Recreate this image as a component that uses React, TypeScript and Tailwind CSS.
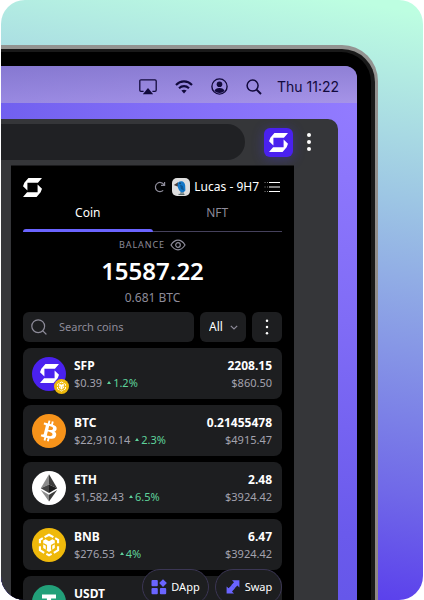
import React from "react";

const FONT = "font-['Noto_Sans','Open_Sans',sans-serif]";

function SMark({ className }: { className: string }) {
  return (
    <svg viewBox="0 0 56 56" className={className} fill="currentColor" aria-hidden="true">
      <path d="M16 0H56L44 14H13V37L0 24 4 14Z" />
      <path d="M40 56H0L12 42H43V19L56 32 52 42Z" />
    </svg>
  );
}

function BnbIcon({ className }: { className: string }) {
  return (
    <svg viewBox="0 0 34 34" className={className} aria-hidden="true">
      <circle cx="17" cy="17" r="17" fill="#efb90b" />
      <g fill="none" stroke="#fff" strokeWidth="2.1">
        <path d="M12.6 9.2 17 6.8 21.4 9.2" />
        <path d="M7.9 15.2V11.8L10.8 10.2" />
        <path d="M26.1 15.2V11.8L23.2 10.2" />
        <path d="M7.9 18.2V22.2L12.2 24.8" />
        <path d="M26.1 18.2V22.2L21.8 24.8" />
        <path d="M14.4 25.9 17 27.4 19.6 25.9" />
      </g>
      <path
        fill="#fff"
        d="M11.2 12.6 13.6 11.3 17 13.3 20.4 11.3 22.8 12.6V20L20.4 21.4 19.4 20.8V22.6L17 24 14.6 22.6V20.8L13.6 21.4 11.2 20Z"
      />
      <path fill="none" stroke="#efb90b" strokeWidth="1.3" d="M11.2 15.6 14.4 17.4V21.6M22.8 15.6 19.6 17.4V21.6" />
    </svg>
  );
}

function SfpIcon() {
  return (
    <span className="relative flex size-[34px] items-center justify-center rounded-full bg-[#4a21ef] text-white">
      <SMark className="size-[19px]" />
      <BnbIcon className="absolute -right-[3px] -bottom-[3px] size-[15px]" />
    </span>
  );
}

function BtcIcon() {
  return (
    <svg viewBox="0 0 32 32" className="size-[34px]" aria-hidden="true">
      <circle cx="16" cy="16" r="16" fill="#f7931a" />
      <path
        fill="#fff"
        d="M23.189 14.02c.314-2.096-1.283-3.223-3.465-3.975l.708-2.84-1.728-.43-.69 2.765c-.454-.114-.92-.22-1.385-.326l.695-2.783L15.596 6l-.708 2.839c-.376-.086-.746-.17-1.104-.26l.002-.009-2.384-.595-.46 1.846s1.283.294 1.256.312c.7.175.826.638.805 1.006l-.806 3.235c.048.012.11.03.18.057l-.183-.045-1.13 4.532c-.086.212-.303.531-.793.41.018.025-1.256-.313-1.256-.313l-.858 1.978 2.25.561c.418.105.828.215 1.231.318l-.715 2.872 1.727.43.708-2.84c.472.127.93.245 1.378.357l-.706 2.828 1.728.43.715-2.866c2.948.558 5.164.333 6.097-2.333.752-2.146-.037-3.385-1.588-4.192 1.13-.26 1.98-1.003 2.207-2.538zm-3.95 5.538c-.533 2.147-4.148.986-5.32.695l.95-3.805c1.172.293 4.929.872 4.37 3.11zm.535-5.569c-.487 1.953-3.495.96-4.47.717l.86-3.45c.975.243 4.118.696 3.61 2.733z"
      />
    </svg>
  );
}

function EthIcon() {
  return (
    <svg viewBox="0 0 34 34" className="size-[34px]" aria-hidden="true">
      <circle cx="17" cy="17" r="17" fill="#fff" />
      <path fill="#8c8c8c" d="M17 3.2V13.6L8.8 17.3Z" />
      <path fill="#3c3c3b" d="M17 3.2 25.2 17.3 17 13.6Z" />
      <path fill="#454545" d="M8.8 17.3 17 13.6V22.1Z" />
      <path fill="#1c1c1c" d="M17 13.6 25.2 17.3 17 22.1Z" />
      <path fill="#8c8c8c" d="M8.8 18.9 17 23.7V30.6Z" />
      <path fill="#3c3c3b" d="M25.2 18.9 17 23.7V30.6Z" />
    </svg>
  );
}

function UsdtIcon() {
  return (
    <svg viewBox="0 0 34 34" className="size-[34px]" aria-hidden="true">
      <circle cx="17" cy="17" r="17" fill="#22a079" />
      <path fill="#fff" d="M10 9.5H24V13.5H19.1V27H14.9V13.5H10Z" />
      <ellipse cx="17" cy="17.6" rx="8.6" ry="2" fill="none" stroke="#fff" strokeWidth="1" />
    </svg>
  );
}

type Coin = { name: string; price: string; change: string; amount: string; value: string; icon: React.ReactNode };

const coins: Coin[] = [
  { name: "SFP", price: "$0.39", change: "1.2%", amount: "2208.15", value: "$860.50", icon: <SfpIcon /> },
  { name: "BTC", price: "$22,910.14", change: "2.3%", amount: "0.21455478", value: "$4915.47", icon: <BtcIcon /> },
  { name: "ETH", price: "$1,582.43", change: "6.5%", amount: "2.48", value: "$3924.42", icon: <EthIcon /> },
  { name: "BNB", price: "$276.53", change: "4%", amount: "6.47", value: "$3924.42", icon: <BnbIcon className="size-[34px]" /> },
  { name: "USDT", price: "", change: "", amount: "", value: "", icon: <UsdtIcon /> },
];

function CoinRow({ coin }: { coin: Coin }) {
  return (
    <li className="flex h-[51px] shrink-0 items-center gap-2 rounded-lg bg-[#1d1e20] pr-[10px] pl-[9px]">
      {coin.icon}
      <div className="flex-1">
        <p className="text-xs leading-[17px] font-bold text-white">{coin.name}</p>
        <p className="flex h-[17px] items-center text-[11px] leading-[17px] text-[#a3a2ae]">
          {coin.price}
          {coin.change && (
            <span className="ml-[5px] flex items-center gap-0.5 text-[#5fd39b]">
              <svg viewBox="0 0 4 3" className="h-[3px] w-1" fill="currentColor" aria-hidden="true">
                <path d="M2 0 4 3H0Z" />
              </svg>
              {coin.change}
            </span>
          )}
        </p>
      </div>
      <div className="text-right">
        <p className="h-[17px] text-xs leading-[17px] font-bold text-white">{coin.amount}</p>
        <p className="h-[17px] text-[11px] leading-[17px] text-[#a3a2ae]">{coin.value}</p>
      </div>
    </li>
  );
}

function Dots({ className, radius = 2 }: { className: string; radius?: number }) {
  return (
    <svg viewBox="0 0 4 18" className={className} fill="currentColor" aria-hidden="true">
      <circle cx="2" cy="2" r={radius} />
      <circle cx="2" cy="9" r={radius} />
      <circle cx="2" cy="16" r={radius} />
    </svg>
  );
}

function MenuBar() {
  return (
    <div className="flex h-[37px] shrink-0 items-center justify-end gap-[15px] bg-gradient-to-b from-[#8f83c4]/70 to-[#b3a4d8]/60 pt-1 pr-[18px] text-[#120a3c]">
      <div className="flex items-center gap-[18px]">
        <svg viewBox="0 0 18 16" className="h-4 w-[18px]" fill="none" stroke="currentColor" strokeWidth="1.3" aria-hidden="true">
          <path d="M4.6 12.3H2Q.8 12.3.8 11.1V2Q.8.8 2 .8H16Q17.2.8 17.2 2V11.1Q17.2 12.3 16 12.3H13.4" />
          <path d="M9 9 14.2 15.3H3.8Z" fill="currentColor" stroke="none" />
        </svg>
        <svg viewBox="0 0 18 14" className="h-[14px] w-[18px]" fill="none" stroke="currentColor" strokeWidth="2.1" aria-hidden="true">
          <path d="M1 4.9Q4.4 1.4 9 1.4T17 4.9" />
          <path d="M4 8.2Q6.2 6.1 9 6.1T14 8.2" />
          <path d="M6.4 10.6Q9 8.8 11.6 10.6L9 13.6Z" fill="currentColor" stroke="none" />
        </svg>
        <svg viewBox="0 0 17 17" className="size-[17px]" fill="none" stroke="currentColor" strokeWidth="1.4" aria-hidden="true">
          <circle cx="8.5" cy="8.5" r="7.6" />
          <circle cx="8.5" cy="6.3" r="2.8" fill="currentColor" stroke="none" />
          <path d="M3.4 13.1Q4.4 10 8.5 10T13.6 13.1Q11.4 15 8.5 15T3.4 13.1Z" fill="currentColor" stroke="none" />
        </svg>
        <svg viewBox="0 0 16 16" className="size-4" fill="none" stroke="currentColor" strokeWidth="1.5" aria-hidden="true">
          <circle cx="6.6" cy="6.6" r="5.5" />
          <path d="M10.6 10.6 15 15" strokeWidth="2" />
        </svg>
      </div>
      <time className="font-['Inter',sans-serif] text-sm leading-4">Thu 11:22</time>
    </div>
  );
}

function Toolbar() {
  return (
    <div className="flex h-[46px] shrink-0 items-start pt-[5px] pr-[27px]">
      <div className="h-9 flex-1 rounded-r-full bg-[#202124]" />
      <button
        type="button"
        aria-label="Wallet extension"
        className="mt-1 ml-[19px] flex size-[29px] items-center justify-center rounded-md bg-[#4a21ef] text-white shadow-[0_2px_12px_1px_rgba(74,60,239,0.3)]"
      >
        <SMark className="size-[19px]" />
      </button>
      <button type="button" aria-label="Browser menu" className="mt-[9px] ml-[14px] text-white">
        <Dots className="h-[18px] w-1" />
      </button>
    </div>
  );
}

function Popup() {
  return (
    <section className={`relative mr-11 ml-[10px] flex min-h-0 flex-1 flex-col overflow-hidden border-t border-[#1b1b1d] bg-black px-3 pt-[11px] text-white ${FONT}`}>
      <header className="flex h-5 shrink-0 items-center">
        <SMark className="size-[19px]" />
        <button type="button" aria-label="Refresh" className="ml-auto text-[#8d8b99]">
          <svg viewBox="0 0 12 12" className="size-3" fill="none" stroke="currentColor" strokeWidth="1.2" aria-hidden="true">
            <path d="M9.2 9.4A4.6 4.6 0 1 1 9.9 3.6M10.6 1V4.4H7" />
          </svg>
        </button>
        <button type="button" className="ml-[6px] flex items-center gap-1 text-xs leading-5">
          <svg viewBox="0 0 18 18" className="size-[18px]" aria-hidden="true">
            <rect width="18" height="18" rx="5" fill="#dedede" />
            <path d="M1.8 7 6 4.2 7.6 8 5.4 8.6Z" fill="#4a3e3c" />
            <path d="M5.6 6Q6.2 3 9.4 3.2T13.2 7.4L13.4 12.4Q11.8 15 9.2 14.4 6.6 12.6 5.8 9.2Z" fill="#1478c8" />
            <path d="M8 6.5 10.8 8 12 12.5 9 11Z" fill="#0d5795" />
            <circle cx="8" cy="5.2" r=".6" fill="#111" />
            <path d="M9 14.2V16.2M11 14.2V16.2M6.5 16.4H12.5" stroke="#263f42" strokeWidth=".8" />
          </svg>
          Lucas - 9H7
        </button>
        <button type="button" aria-label="Accounts" className="ml-[5px] text-white">
          <svg viewBox="0 0 16 12" className="mr-0.5 h-3 w-4" fill="none" stroke="currentColor" strokeWidth="1.1" aria-hidden="true">
            <path d="M5 1.5H16M5 6H16M5 10.5H16" />
            <path d="M.5 1.5H1.6M.5 6H1.6M.5 10.5H1.6M3 1.5H4M3 6H4M3 10.5H4" opacity=".5" />
          </svg>
        </button>
      </header>

      <div role="tablist" className="mt-2 flex shrink-0 text-xs leading-4">
        <button type="button" role="tab" aria-selected="true" className="flex h-[27px] flex-1 flex-col items-center justify-between">
          Coin
          <span className="h-[3px] w-full rounded-t-sm bg-[#6a64ff]" />
        </button>
        <button type="button" role="tab" aria-selected="false" className="flex h-[27px] flex-1 items-start justify-center border-b border-[#45415c] text-[#8d8b99]">
          NFT
        </button>
      </div>

      <div className="mt-[5px] flex shrink-0 flex-col items-center text-[#8d8b99]">
        <div className="flex h-4 items-center gap-[5px]">
          <span className="text-[9px] leading-4 tracking-widest">BALANCE</span>
          <button type="button" aria-label="Hide balance">
            <svg viewBox="0 0 16 12" className="h-3 w-4" fill="none" stroke="currentColor" strokeWidth="1.2" aria-hidden="true">
              <path d="M1 6Q4 1.2 8 1.2T15 6Q12 10.8 8 10.8T1 6Z" />
              <circle cx="8" cy="6" r="2.3" />
            </svg>
          </button>
        </div>
        <p className="text-2xl leading-9 font-semibold text-white">15587.22</p>
        <p className="text-xs leading-[18px]">0.681 BTC</p>
      </div>

      <div className="mt-[5px] flex h-[30px] shrink-0 gap-1.5">
        <label className="flex min-w-0 flex-1 items-center gap-3 rounded-md bg-[#1d1e20] pl-2 text-[#8d8b99]">
          <svg viewBox="0 0 16 16" className="size-4 shrink-0" fill="none" stroke="currentColor" strokeWidth="1.2" strokeLinecap="round" aria-hidden="true">
            <circle cx="7.2" cy="7.2" r="6.4" />
            <path d="M11.8 11.8 15 15" />
          </svg>
          <input
            type="text"
            aria-label="Search coins"
            placeholder="Search coins"
            className="w-full min-w-0 bg-transparent text-[11px] leading-4 outline-none placeholder:text-[#8d8b99]"
          />
        </label>
        <div className="relative w-[46px]">
          <select aria-label="Coin filter" className="h-full w-full appearance-none rounded-md bg-[#1d1e20] pl-[9px] text-xs text-white">
            <option>All</option>
          </select>
          <svg viewBox="0 0 8 5" className="pointer-events-none absolute top-[13px] right-2 h-[5px] w-2" fill="none" stroke="#8d8b99" strokeWidth="1.2" aria-hidden="true">
            <path d="M.8.8 4 4 7.2.8" />
          </svg>
        </div>
        <button type="button" aria-label="More options" className="flex w-[30px] items-center justify-center rounded-md bg-[#1d1e20]">
          <Dots className="h-4 w-1" radius={1.4} />
        </button>
      </div>

      <ul className="mt-1.5 flex min-h-0 flex-1 flex-col gap-1.5 overflow-hidden">
        {coins.map((coin) => (
          <CoinRow key={coin.name} coin={coin} />
        ))}
      </ul>

      <nav className="absolute right-3 -bottom-[5px] flex gap-1.5 text-[11px] leading-4">
        <a href="#dapp" className="flex h-9 w-[67px] items-center justify-center gap-1 rounded-full border border-[#3b3654] bg-[#1d1e20]">
          <svg viewBox="0 0 16 16" className="size-4" fill="#6a64ff" aria-hidden="true">
            <rect x=".5" y="1" width="6.3" height="6.3" rx="1" />
            <rect x=".5" y="9" width="6.3" height="6.3" rx="1" />
            <rect x="8.9" y="9" width="6.3" height="6.3" rx="1" />
            <path d="M12 .2 15.9 4 12 7.9 8.2 4Z" />
          </svg>
          DApp
        </a>
        <a href="#swap" className="flex h-9 w-[67px] items-center justify-center gap-1 rounded-full border border-[#3b3654] bg-[#1d1e20]">
          <svg viewBox="0 0 16 16" className="size-4" fill="#6a64ff" aria-hidden="true">
            <path d="M7 1.2H14.4V8.4L12.4 6.6 9.4 9.6 6.2 6.2 9 3.2Z" />
            <path d="M9 14.6H1.6V7.4L3.6 9.2 6.6 6.2 9.8 9.6 7 12.6Z" />
          </svg>
          Swap
        </a>
      </nav>
    </section>
  );
}

export default function App() {
  return (
    <div className="h-screen bg-white px-px">
      <main className="flex h-full flex-col overflow-hidden rounded-3xl bg-[linear-gradient(190deg,#bdfee1_2%,#9dc6e4_30%,#7068e8_74%,#5230ee_97%)] pt-[45px] pr-[45px]">
        <div className="flex min-h-0 flex-1 flex-col rounded-tr-[36px] bg-linear-to-b from-[#939391] to-[#8f8886] pt-1 pr-[3px]">
          <div className="flex min-h-0 flex-1 flex-col rounded-tr-[33px] bg-[#191919] pt-[3px] pr-1">
            <div className="flex min-h-0 flex-1 flex-col rounded-tr-[30px] bg-black pt-[14px] pr-[14px]">
              <div className="flex min-h-0 flex-1 flex-col overflow-hidden rounded-tr-xl bg-[radial-gradient(circle_at_100%_8%,#927bff_0%,#806cf6_35%,#6a5aec_70%,#5f52e6_100%)]">
                <MenuBar />
                <div className="mt-4 mr-[19px] flex min-h-0 flex-1 flex-col rounded-tr-[10px] bg-[#353639]">
                  <Toolbar />
                  <Popup />
                </div>
              </div>
            </div>
          </div>
        </div>
      </main>
    </div>
  );
}
